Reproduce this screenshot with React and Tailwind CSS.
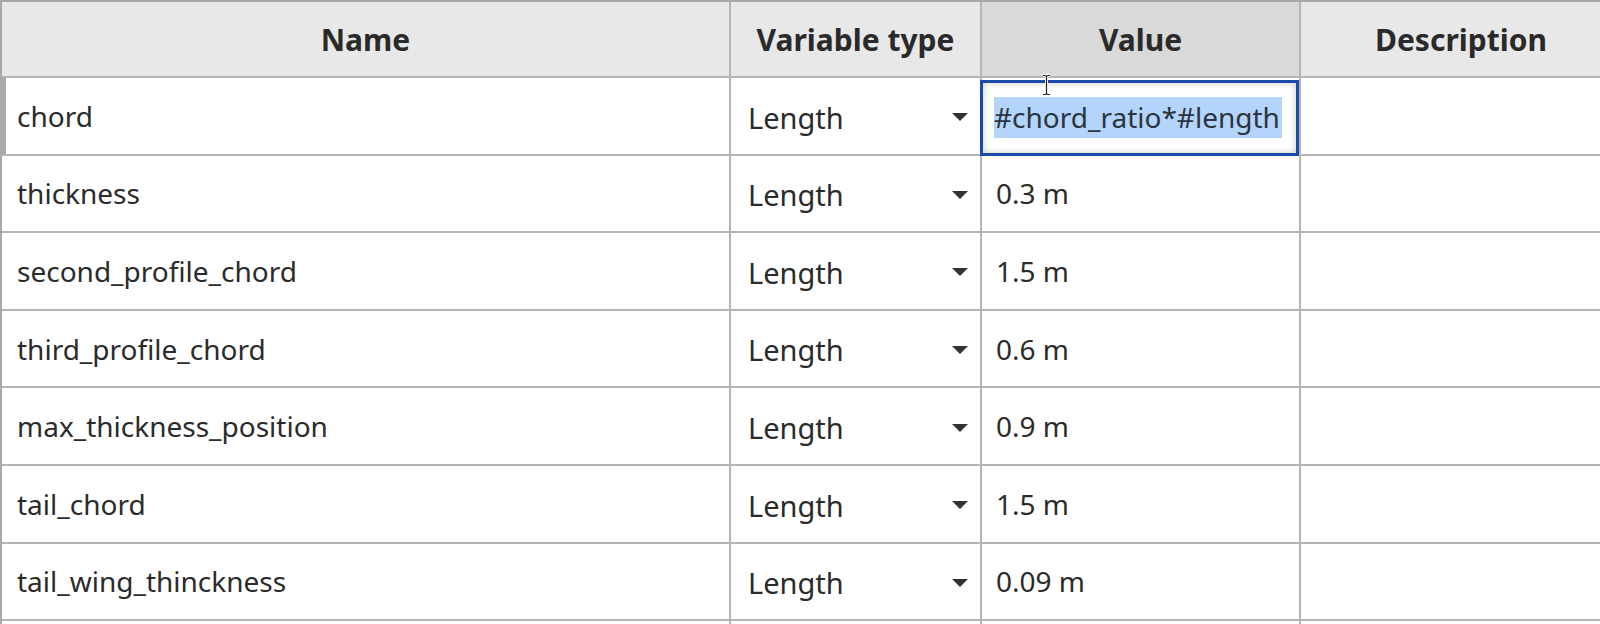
const rows = [
  { name: "chord", type: "Length", value: "#chord_ratio*#length", editing: true },
  { name: "thickness", type: "Length", value: "0.3 m" },
  { name: "second_profile_chord", type: "Length", value: "1.5 m" },
  { name: "third_profile_chord", type: "Length", value: "0.6 m" },
  { name: "max_thickness_position", type: "Length", value: "0.9 m" },
  { name: "tail_chord", type: "Length", value: "1.5 m" },
  { name: "tail_wing_thinckness", type: "Length", value: "0.09 m" },
  { name: "", type: "", value: "" },
];

const cols = "grid grid-cols-[729px_251px_319px_320px]";

function Caret() {
  return (
    <svg width="16" height="8" viewBox="0 0 16 8" className="shrink-0">
      <path d="M0 0 L16 0 L8 8 Z" fill="#333333" />
    </svg>
  );
}

function IBeam() {
  return (
    <svg width="9" height="22" viewBox="0 0 9 22" className="absolute left-[60px] -top-[4px]">
      <path d="M1 1.5 H3 Q4.5 1.5 4.5 3 V19 Q4.5 20.5 3 20.5 H1 M8 1.5 H6 Q4.5 1.5 4.5 3 M8 20.5 H6 Q4.5 20.5 4.5 19" fill="none" stroke="#ffffff" strokeWidth="3" />
      <path d="M1 1.5 H3 Q4.5 1.5 4.5 3 V19 Q4.5 20.5 3 20.5 H1 M8 1.5 H6 Q4.5 1.5 4.5 3 M8 20.5 H6 Q4.5 20.5 4.5 19" fill="none" stroke="#222222" strokeWidth="1.2" />
    </svg>
  );
}

function Row({ row }) {
  return (
    <div className={`${cols} h-[77.6px] relative`}>
      <div className="border-r-2 border-b-2 border-[#b5b5b5] flex items-center pl-[15px] text-[28px] text-[#2b2b2b]">
        {row.name}
      </div>
      <div className="border-r-2 border-b-2 border-[#b5b5b5] flex items-center pl-[17px] pr-[12px] pt-[3px] text-[29px] text-[#2b2b2b]">
        {row.type && (
          <>
            <span className="flex-1">{row.type}</span>
            <Caret />
          </>
        )}
      </div>
      <div className="relative border-r-2 border-b-2 border-[#b5b5b5] flex items-center pl-[14px] text-[28px] text-[#2b2b2b]">
        {row.editing ? (
          <>
            <div className="absolute -left-[2px] right-0 top-[2px] -bottom-[2px] border-[3px] border-[#1a4bab] bg-white shadow-[inset_0_0_7px_rgba(0,0,0,0.22)] flex items-center pl-[11px]">
              <span className="bg-[#b3d4fb] leading-[41px] pr-[2px] text-[#2c3440]">{row.value}</span>
            </div>
            <IBeam />
          </>
        ) : (
          row.value
        )}
      </div>
      <div className="border-b-2 border-[#b5b5b5]" />
      {row.editing && <div className="absolute -left-[2px] top-0 bottom-[2px] w-[6px] bg-[#a9a9a9]" />}
    </div>
  );
}

export default function App() {
  return (
    <div className="w-[1600px] h-[624px] overflow-hidden bg-white" style={{ fontFamily: '"Noto Sans", "Liberation Sans", sans-serif' }}>
      <div className="w-[1622px] border-t-2 border-l-2 border-[#a8a8a8]">
        <div className={`${cols} h-[76px] text-[30px] font-bold text-[#2a2a2a]`}>
          <div className="bg-[#e8e8e8] border-r-2 border-b-2 border-[#b5b5b5] flex items-center justify-center">Name</div>
          <div className="bg-[#e8e8e8] border-r-2 border-b-2 border-[#b5b5b5] flex items-center justify-center">Variable type</div>
          <div className="bg-[#d9d9d9] border-r-2 border-b-2 border-[#b5b5b5] flex items-center justify-center">Value</div>
          <div className="bg-[#e8e8e8] border-b-2 border-[#b5b5b5] flex items-center justify-center">Description</div>
        </div>
        {rows.map((row, i) => (
          <Row key={i} row={row} />
        ))}
      </div>
    </div>
  );
}
